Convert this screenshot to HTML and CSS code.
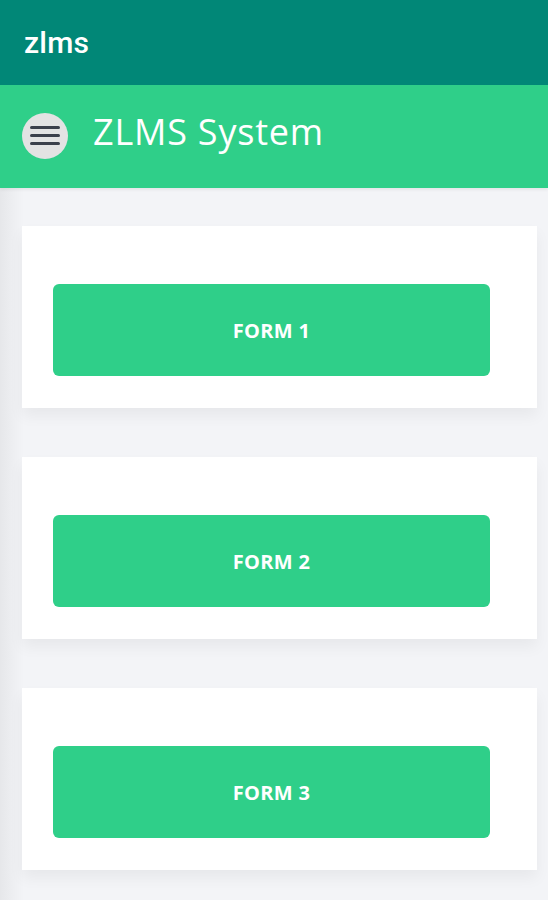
FILE: index.html
```html
<!DOCTYPE html>
<html>
<head>
<meta charset="utf-8">
<link rel="stylesheet" href="styles.css">
</head>
<body>
<div class="appbar">zlms</div>
<header class="header">
  <button class="menu" aria-label="menu">
    <span></span><span></span><span></span>
  </button>
  <h1 class="title">ZLMS System</h1>
</header>
<main class="content">
  <section class="card"><button class="form-btn">FORM 1</button></section>
  <section class="card"><button class="form-btn">FORM 2</button></section>
  <section class="card"><button class="form-btn">FORM 3</button></section>
</main>
</body>
</html>
```
FILE: styles.css
```css
* { box-sizing: border-box; }
html, body { margin: 0; padding: 0; }
body {
  width: 548px;
  height: 900px;
  overflow: hidden;
  background: linear-gradient(to right, #e6e7ea 0px, #eeeff2 14px, #f3f4f7 24px, #f3f4f7 100%);
  font-family: "Open Sans", Lato, sans-serif;
}
.appbar {
  height: 85px;
  background: #018777;
  color: #fff;
  font-family: Roboto, "Liberation Sans", sans-serif;
  font-weight: 500;
  font-size: 30px;
  line-height: 85px;
  padding-left: 24px;
  letter-spacing: 0.2px;
}
.header {
  height: 103px;
  background: #2fcf89;
  display: flex;
  align-items: center;
  padding-left: 22px;
  gap: 25px;
  box-shadow: 0 2px 3px rgba(0,0,0,0.06);
}
.menu {
  width: 46px;
  height: 46px;
  border-radius: 50%;
  border: none;
  background: #e3e3e3;
  display: flex;
  flex-direction: column;
  justify-content: center;
  align-items: center;
  gap: 5px;
  padding: 0;
  margin-top: -2px;
}
.menu span {
  display: block;
  width: 30px;
  height: 3px;
  border-radius: 2px;
  background: #3b404b;
}
.title {
  margin: 0 0 10px 0;
  color: #fff;
  font-family: "Open Sans", sans-serif;
  font-weight: 400;
  font-size: 36px;
  letter-spacing: 0.8px;
}
.content {
  padding: 38px 11px 0 22px;
  display: flex;
  flex-direction: column;
  gap: 49px;
}
.card {
  height: 182px;
  background: #fff;
  padding: 58px 47px 0 31px;
  box-shadow: 0 8px 14px rgba(0,0,0,0.05);
}
.form-btn {
  display: block;
  width: 100%;
  height: 92px;
  border: none;
  border-radius: 6px;
  background: #2fcf89;
  color: #fff;
  font-family: "Open Sans", sans-serif;
  font-weight: 700;
  font-size: 20px;
  letter-spacing: 0.3px;
}
```
